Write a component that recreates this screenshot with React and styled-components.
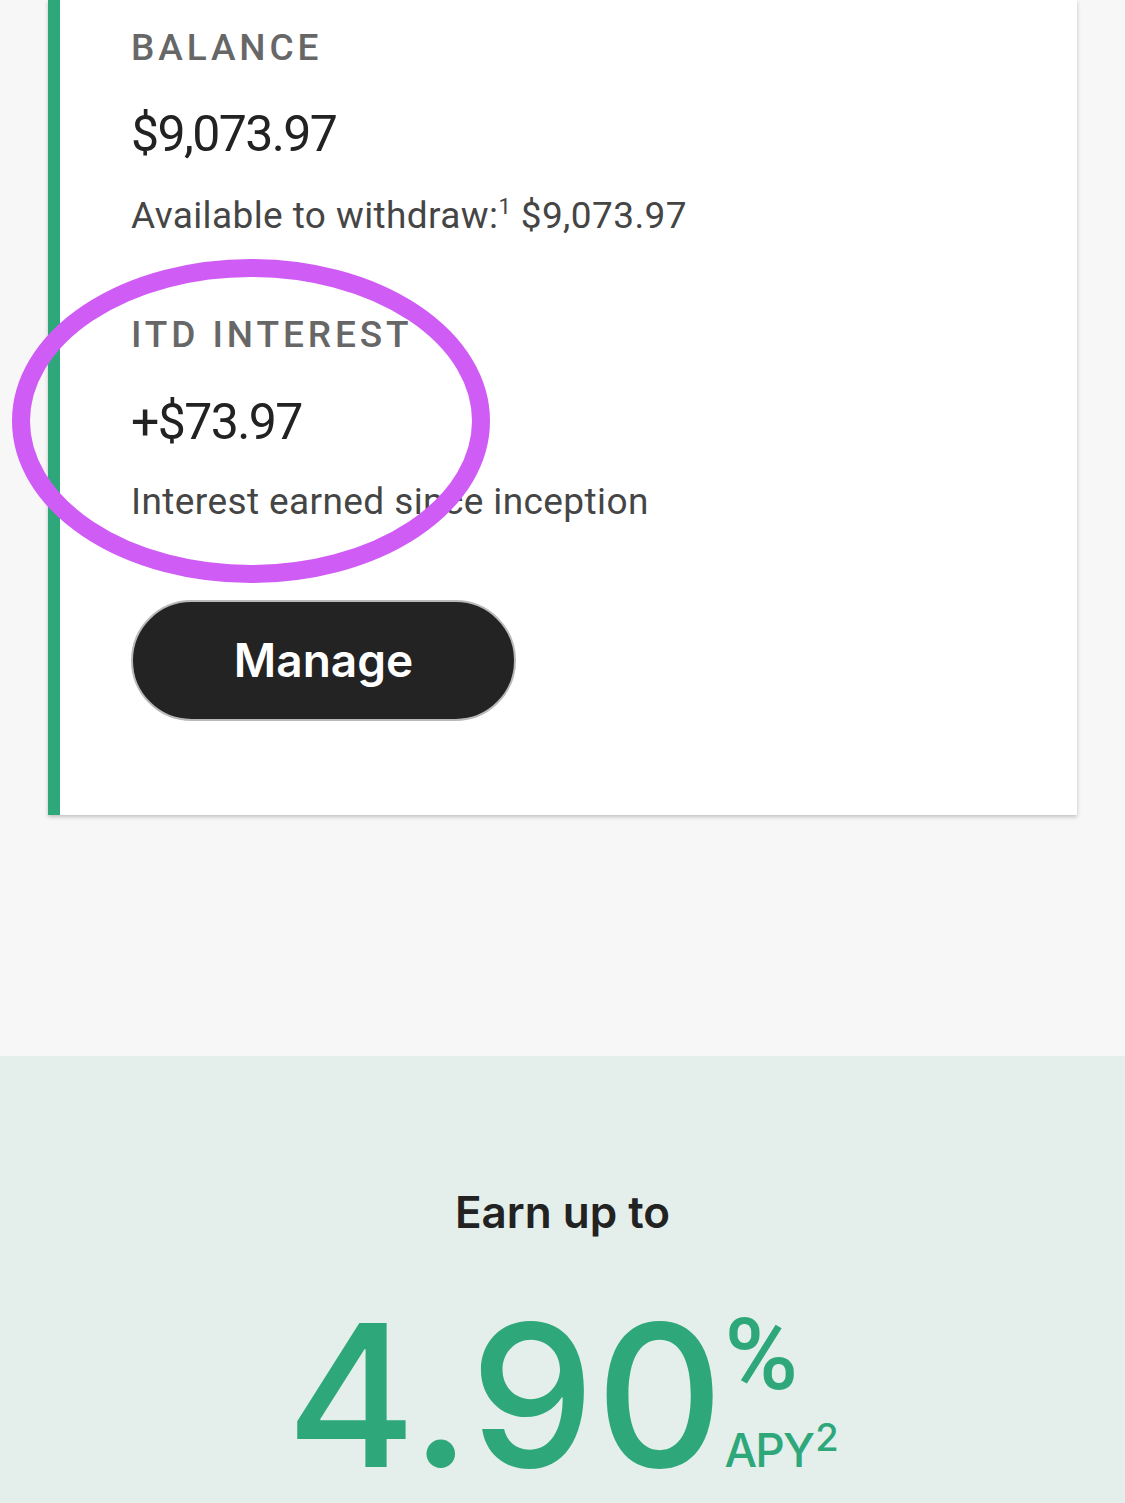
import React from 'react'
import styled, { createGlobalStyle } from 'styled-components'

const GlobalStyle = createGlobalStyle`
  html, body {
    margin: 0;
    padding: 0;
    background: #f7f7f7;
  }
  body {
    font-family: Roboto, "Liberation Sans", sans-serif;
    color: #222;
    -webkit-font-smoothing: antialiased;
  }
`

const green = '#2ea87a'

const Page = styled.div`
  width: 1125px;
  overflow: hidden;
`

const CardWrap = styled.div`
  position: relative;
  padding: 0 48px 241px 48px;
`

const Card = styled.section`
  background: #fff;
  border-left: 12px solid ${green};
  padding: 30px 0 94px 71px;
  box-shadow: 0 2px 4px rgba(0, 0, 0, 0.22);
`

const Label = styled.div`
  font-family: Roboto, "Liberation Sans", sans-serif;
  font-weight: 500;
  font-size: 37px;
  line-height: 36px;
  letter-spacing: 3.9px;
  color: #676767;
  margin-top: ${p => p.$gap || 0}px;
`

const Amount = styled.div`
  font-size: 50px;
  line-height: 50px;
  font-weight: 400;
  letter-spacing: -1.6px;
  color: #222;
  margin-top: ${p => p.$gap}px;
`

const Note = styled.div`
  font-size: 37px;
  line-height: 37px;
  letter-spacing: 0.4px;
  color: #454545;
  margin-top: ${p => p.$gap}px;

  sup {
    font-size: 22px;
    vertical-align: 14px;
    line-height: 0;
  }
`

const ManageButton = styled.button`
  display: flex;
  align-items: center;
  justify-content: center;
  margin-top: 80px;
  width: 385px;
  height: 121px;
  border-radius: 61px;
  background: #232323;
  border: 2px solid #b9b9b9;
  color: #fff;
  font-family: Inter, "Liberation Sans", sans-serif;
  font-weight: 600;
  font-size: 46px;
  padding: 0 0 2px;
  cursor: pointer;
`

const Highlight = styled.svg`
  position: absolute;
  left: 0;
  top: 250px;
  width: 510px;
  height: 345px;
  pointer-events: none;
`

const Promo = styled.section`
  background: #e4efeb;
  padding: 134px 0 60px;
  text-align: center;
`

const Lead = styled.div`
  font-family: Inter, "Liberation Sans", sans-serif;
  font-weight: 600;
  font-size: 44px;
  line-height: 44px;
  color: #222;
`

const Rate = styled.div`
  margin-top: 62px;
  color: ${green};
  font-family: Inter, "Liberation Sans", sans-serif;
  white-space: nowrap;
`

const Big = styled.span`
  font-size: 198px;
  line-height: 198px;
  font-weight: 500;
  letter-spacing: 1px;
  vertical-align: baseline;
`

const Suffix = styled.span`
  display: inline-block;
  vertical-align: baseline;
  text-align: left;
  margin-left: 0;
`

const Percent = styled.span`
  display: block;
  font-family: Roboto, "Liberation Sans", sans-serif;
  font-weight: 500;
  font-size: 100px;
  line-height: 100px;
`

const Apy = styled.span`
  display: block;
  margin-top: 22px;
  font-size: 46px;
  line-height: 46px;
  font-weight: 500;
  letter-spacing: -1.8px;

  sup {
    font-size: 38px;
    line-height: 0;
    vertical-align: 16px;
    letter-spacing: 0;
    margin-left: 2px;
  }
`

export default function App() {
  return (
    <Page>
      <GlobalStyle />
      <CardWrap>
        <Card>
          <Label>BALANCE</Label>
          <Amount $gap={43}>$9,073.97</Amount>
          <Note $gap={38}>
            Available to withdraw:<sup>1</sup> $9,073.97
          </Note>
          <Label $gap={83}>ITD INTEREST</Label>
          <Amount $gap={44}>+$73.97</Amount>
          <Note $gap={36}>Interest earned since inception</Note>
          <ManageButton>Manage</ManageButton>
        </Card>
        <Highlight viewBox="0 0 510 345">
          <ellipse
            cx="251"
            cy="171"
            rx="230"
            ry="153"
            fill="none"
            stroke="#d05cf6"
            strokeWidth="18"
          />
        </Highlight>
      </CardWrap>
      <Promo>
        <Lead>Earn up to</Lead>
        <Rate>
          <Big>4.90</Big>
          <Suffix>
            <Percent>%</Percent>
            <Apy>
              APY<sup>2</sup>
            </Apy>
          </Suffix>
        </Rate>
      </Promo>
    </Page>
  )
}
